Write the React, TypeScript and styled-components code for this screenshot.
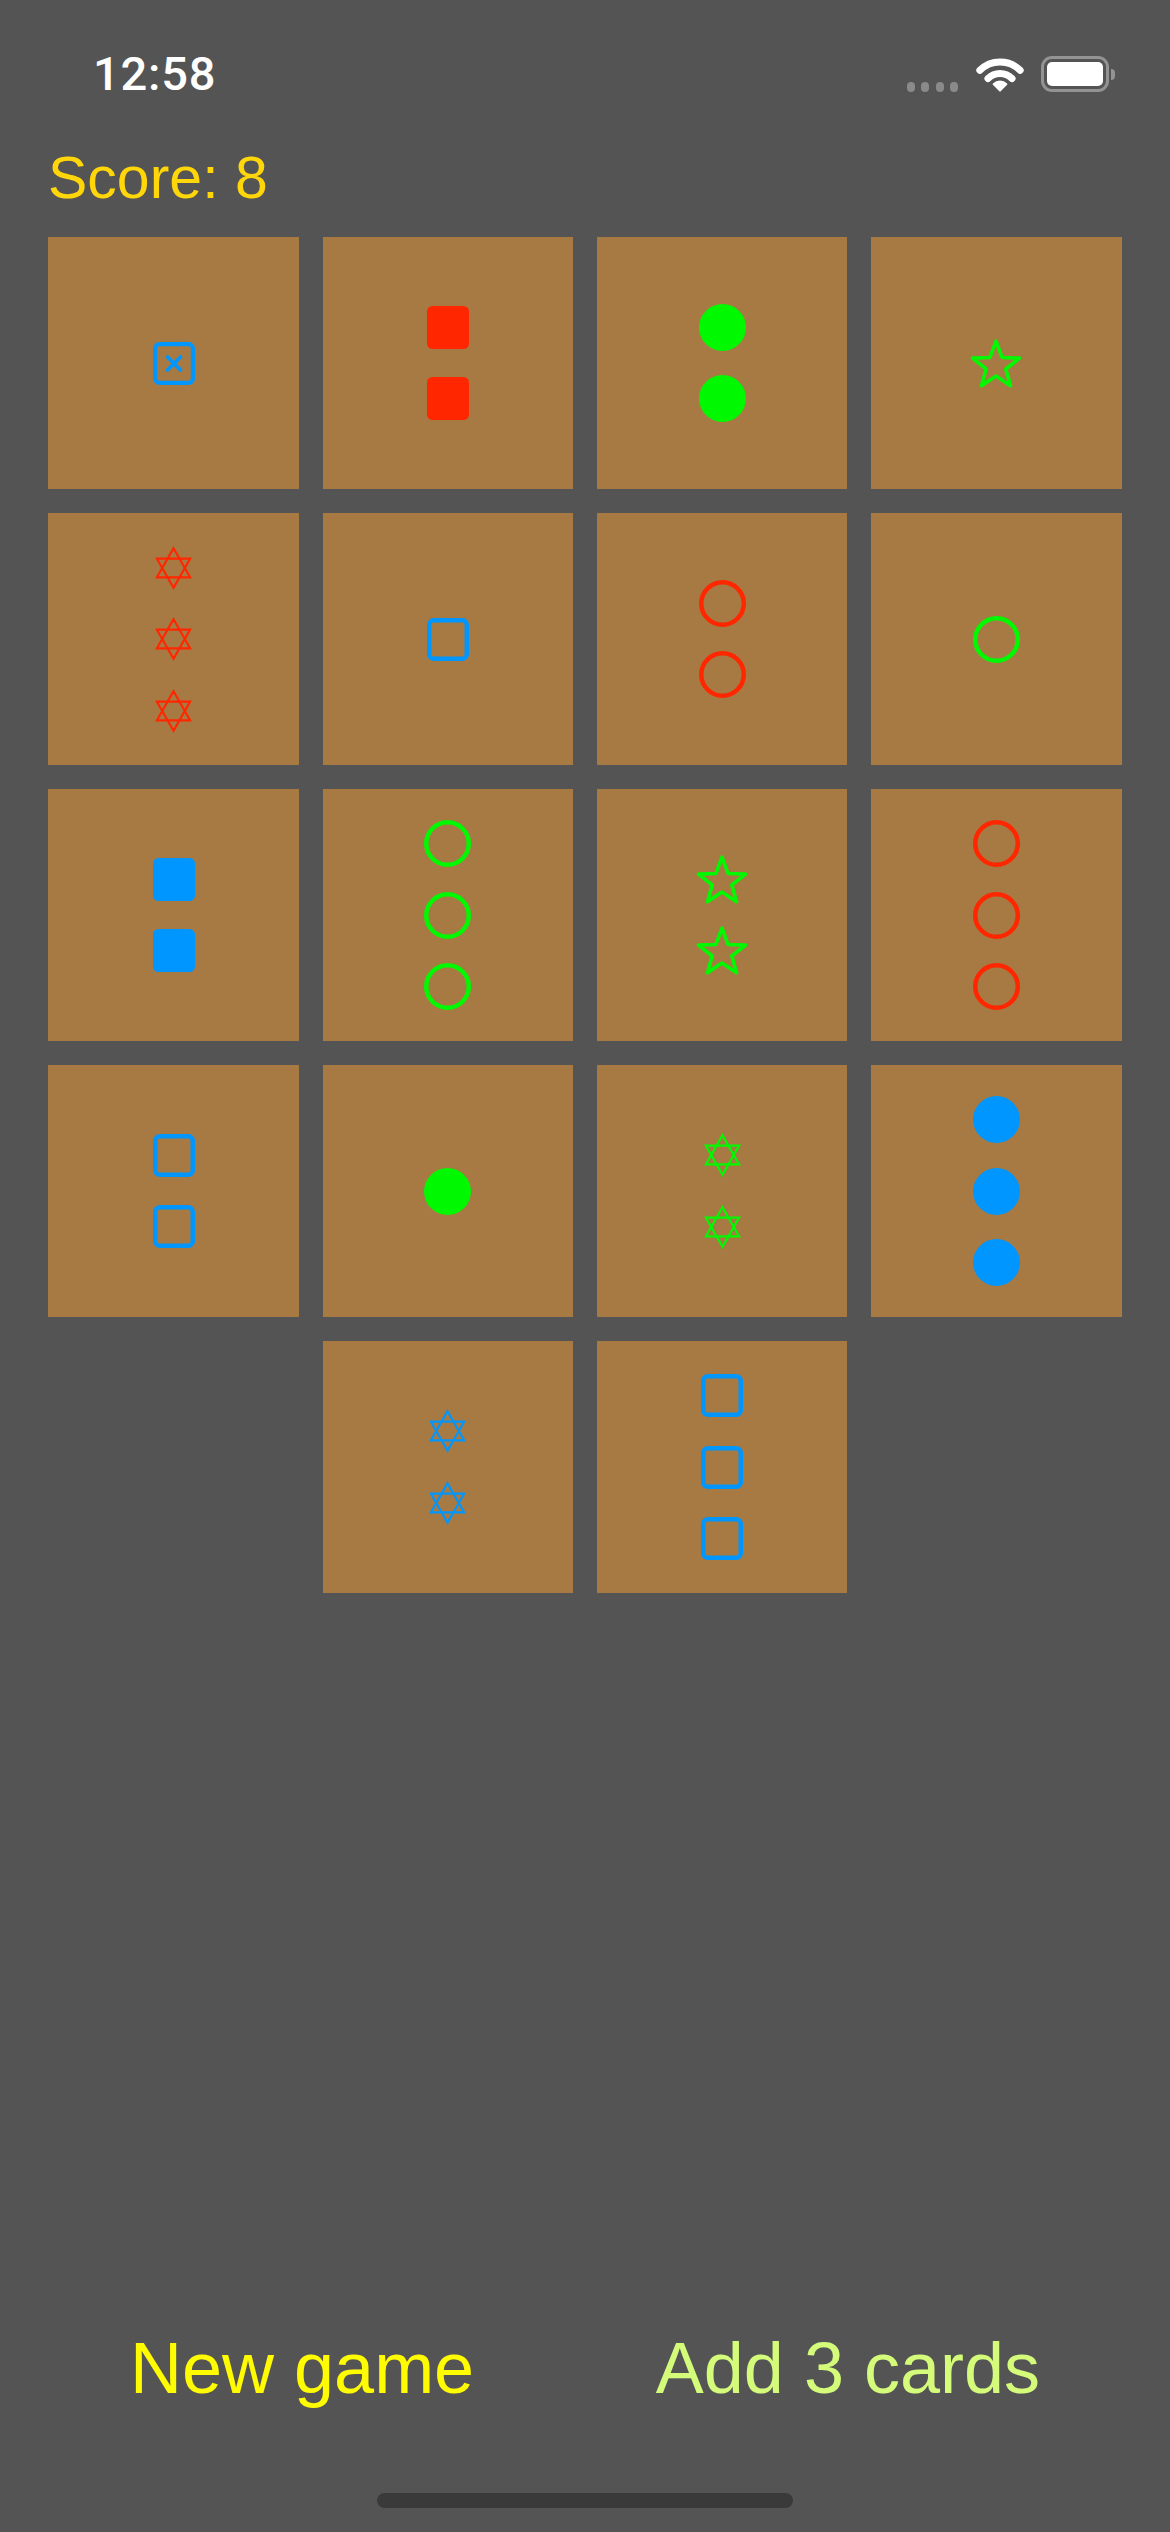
import React from "react";
import styled, { createGlobalStyle } from "styled-components";

const GlobalStyle = createGlobalStyle`
  *, *::before, *::after { box-sizing: border-box; }
  html, body { margin: 0; padding: 0; background: #545454; }
  body { font-family: "Liberation Sans", Arial, sans-serif; }
`;

const BLUE = "#0096FF";
const RED = "#FF2600";
const GREEN = "#00F900";

type Kind =
  | "square"
  | "squareOutline"
  | "squareX"
  | "circle"
  | "circleOutline"
  | "star"
  | "hexagram";

interface CardData {
  kind: Kind;
  color: string;
  count: number;
}

const cards: CardData[] = [
  { kind: "squareX", color: BLUE, count: 1 },
  { kind: "square", color: RED, count: 2 },
  { kind: "circle", color: GREEN, count: 2 },
  { kind: "star", color: GREEN, count: 1 },
  { kind: "hexagram", color: RED, count: 3 },
  { kind: "squareOutline", color: BLUE, count: 1 },
  { kind: "circleOutline", color: RED, count: 2 },
  { kind: "circleOutline", color: GREEN, count: 1 },
  { kind: "square", color: BLUE, count: 2 },
  { kind: "circleOutline", color: GREEN, count: 3 },
  { kind: "star", color: GREEN, count: 2 },
  { kind: "circleOutline", color: RED, count: 3 },
  { kind: "squareOutline", color: BLUE, count: 2 },
  { kind: "circle", color: GREEN, count: 1 },
  { kind: "hexagram", color: GREEN, count: 2 },
  { kind: "circle", color: BLUE, count: 3 },
  { kind: "hexagram", color: BLUE, count: 2 },
  { kind: "squareOutline", color: BLUE, count: 3 },
];

const Screen = styled.div`
  width: 1170px;
  min-height: 100vh;
  background: #545454;
  display: flex;
  flex-direction: column;
`;

const StatusBar = styled.div`
  height: 132px;
  padding: 16px 55px 0 93px;
  display: flex;
  align-items: center;
  justify-content: space-between;
`;

const Time = styled.div`
  color: #ffffff;
  font-family: Roboto, "Liberation Sans", sans-serif;
  font-size: 47px;
  line-height: 56px;
  font-weight: 500;
  letter-spacing: 0.8px;
`;

const StatusIcons = styled.div`
  display: flex;
  align-items: center;
  gap: 17.5px;
`;

const SignalDots = styled.div`
  display: flex;
  gap: 6.3px;
  margin-top: 26px;
`;

const SignalDot = styled.span`
  width: 8px;
  height: 10px;
  border-radius: 4px;
  background: #8a8a8a;
`;

const Battery = styled.div`
  display: flex;
  align-items: center;
`;

const BatteryBody = styled.div`
  width: 68px;
  height: 36px;
  border: 3px solid #939393;
  border-radius: 11px;
  padding: 3px;
  display: flex;
`;

const BatteryLevel = styled.div`
  flex: 1;
  background: #ffffff;
  border-radius: 5px;
`;

const BatteryCap = styled.div`
  width: 4px;
  height: 11px;
  margin-left: 2px;
  background: #939393;
  border-radius: 0 4px 4px 0;
`;

const Score = styled.div`
  margin-top: 10px;
  padding-left: 48px;
  font-size: 59px;
  line-height: 72px;
  color: #ffd60a;
`;

const Board = styled.div`
  margin-top: 23px;
  padding: 0 48px;
  display: flex;
  flex-wrap: wrap;
  justify-content: center;
  gap: 24px 23.8px;
`;

const Card = styled.div`
  width: 250.5px;
  height: 252px;
  background: #a87a43;
  display: flex;
  align-items: center;
  justify-content: center;
`;

const ShapeStack = styled.div`
  display: flex;
  flex-direction: column;
  align-items: center;
`;

const ShapeSlot = styled.div`
  height: 71.5px;
  display: flex;
  align-items: center;
  justify-content: center;
`;

const Spacer = styled.div`
  flex: 1;
`;

const ButtonRow = styled.div`
  display: flex;
  justify-content: space-between;
  padding: 0 130px;
`;

const ActionButton = styled.button<{ $tint: string }>`
  background: none;
  border: none;
  padding: 0;
  font-family: "Liberation Sans", Arial, sans-serif;
  font-size: 72px;
  line-height: 88px;
  color: ${(p) => p.$tint};
  cursor: pointer;
`;

const HomeArea = styled.div`
  padding: 81px 0 24px;
  display: flex;
  justify-content: center;
`;

const HomeIndicator = styled.div`
  width: 416px;
  height: 15px;
  border-radius: 8px;
  background: #3a3a3a;
`;

const starPoints = (() => {
  const cx = 26;
  const cy = 26.8;
  const pts: string[] = [];
  for (let k = 0; k < 10; k++) {
    const a = ((-90 + 36 * k) * Math.PI) / 180;
    const r = k % 2 === 0 ? 24.7 : 10.3;
    pts.push(`${(cx + r * Math.cos(a)).toFixed(2)},${(cy + r * Math.sin(a)).toFixed(2)}`);
  }
  return pts.join(" ");
})();

const Glyph: React.FC<{ kind: Kind; color: string }> = ({ kind, color }) => {
  switch (kind) {
    case "square":
      return (
        <svg width={42} height={43} viewBox="0 0 42 43">
          <rect x={0} y={0} width={42} height={43} rx={5.5} fill={color} />
        </svg>
      );
    case "squareOutline":
      return (
        <svg width={42} height={43} viewBox="0 0 42 43">
          <rect x={2.25} y={2.25} width={37.5} height={38.5} rx={4.5} fill="none" stroke={color} strokeWidth={4.5} />
        </svg>
      );
    case "squareX":
      return (
        <svg width={42} height={43} viewBox="0 0 42 43">
          <rect x={2.1} y={2.1} width={37.8} height={38.8} rx={4.5} fill="none" stroke={color} strokeWidth={4.2} />
          <path d="M14.5 15 L27.5 28 M27.5 15 L14.5 28" stroke={color} strokeWidth={3.8} strokeLinecap="round" fill="none" />
        </svg>
      );
    case "circle":
      return (
        <svg width={47} height={47} viewBox="0 0 47 47">
          <circle cx={23.5} cy={23.5} r={23.5} fill={color} />
        </svg>
      );
    case "circleOutline":
      return (
        <svg width={47} height={47} viewBox="0 0 47 47">
          <circle cx={23.5} cy={23.5} r={21.25} fill="none" stroke={color} strokeWidth={4.5} />
        </svg>
      );
    case "star":
      return (
        <svg width={52} height={49} viewBox="0 0 52 49">
          <polygon points={starPoints} fill="none" stroke={color} strokeWidth={3.6} strokeLinejoin="round" />
        </svg>
      );
    case "hexagram":
      return (
        <svg width={37} height={44} viewBox="0 0 37 44">
          <polygon points="18.5,2.2 35.1,31.3 1.9,31.3" fill="none" stroke={color} strokeWidth={2.2} />
          <polygon points="18.5,41.8 1.9,12.7 35.1,12.7" fill="none" stroke={color} strokeWidth={2.2} />
        </svg>
      );
  }
};

const WifiIcon = () => (
  <svg width={48} height={36} viewBox="0 0 48 36">
    <path d="M3.85 14.35 A28.5 28.5 0 0 1 44.15 14.35" fill="none" stroke="#fff" strokeWidth={7} strokeLinecap="round" />
    <path d="M11.98 22.48 A17 17 0 0 1 36.02 22.48" fill="none" stroke="#fff" strokeWidth={7} strokeLinecap="round" />
    <path d="M24 34.5 L17.6 28.1 A9 9 0 0 1 30.4 28.1 Z" fill="#fff" stroke="#fff" strokeWidth={2} strokeLinejoin="round" />
  </svg>
);

export default function App() {
  return (
    <Screen>
      <GlobalStyle />
      <StatusBar>
        <Time>12:58</Time>
        <StatusIcons>
          <SignalDots>
            <SignalDot />
            <SignalDot />
            <SignalDot />
            <SignalDot />
          </SignalDots>
          <WifiIcon />
          <Battery>
            <BatteryBody>
              <BatteryLevel />
            </BatteryBody>
            <BatteryCap />
          </Battery>
        </StatusIcons>
      </StatusBar>
      <Score>Score: 8</Score>
      <Board>
        {cards.map((c, i) => (
          <Card key={i}>
            <ShapeStack>
              {Array.from({ length: c.count }).map((_, j) => (
                <ShapeSlot key={j}>
                  <Glyph kind={c.kind} color={c.color} />
                </ShapeSlot>
              ))}
            </ShapeStack>
          </Card>
        ))}
      </Board>
      <Spacer />
      <ButtonRow>
        <ActionButton $tint="#FFFB00">New game</ActionButton>
        <ActionButton $tint="#D4FB79">Add 3 cards</ActionButton>
      </ButtonRow>
      <HomeArea>
        <HomeIndicator />
      </HomeArea>
    </Screen>
  );
}
